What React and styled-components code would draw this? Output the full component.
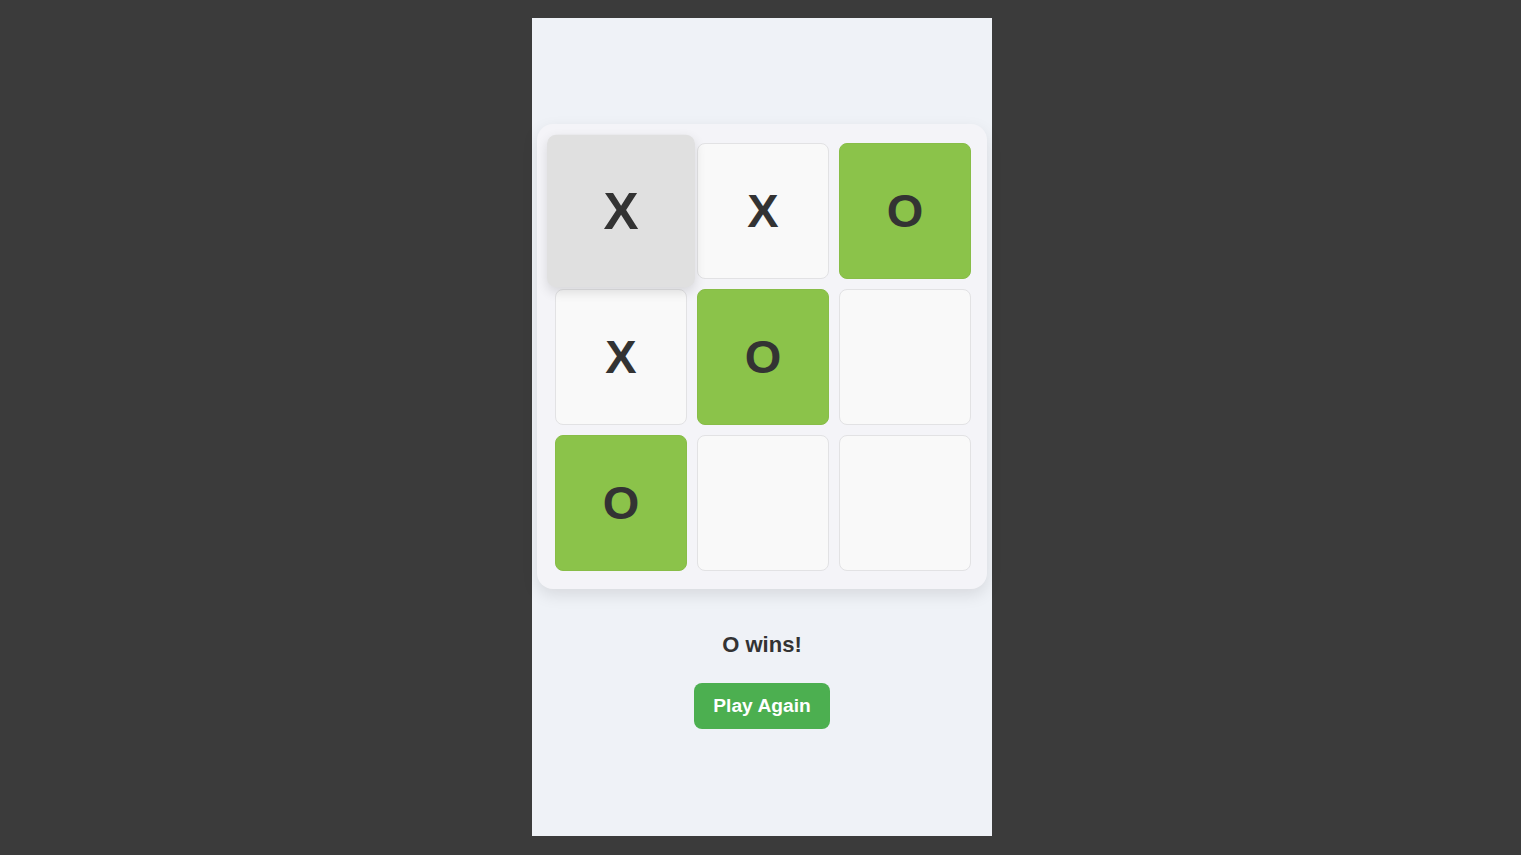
import React, { useState } from "react";
import styled, { createGlobalStyle } from "styled-components";

const GlobalStyle = createGlobalStyle`
  html, body {
    margin: 0;
    padding: 0;
    background-color: #3b3b3b;
    font-family: "Liberation Sans", Arial, sans-serif;
  }
`;

const Page = styled.div`
  width: 100%;
  height: 855px;
  box-sizing: border-box;
  padding-top: 18px;
  display: flex;
  justify-content: center;
  align-items: flex-start;
`;

const Phone = styled.main`
  width: 460px;
  height: 818px;
  margin-left: 3px;
  background-color: #eff2f7;
  display: flex;
  flex-direction: column;
  align-items: center;
  justify-content: flex-start;
  padding-top: 106px;
  box-sizing: border-box;
`;

const Board = styled.div`
  width: 450px;
  box-sizing: border-box;
  padding: 19px 17px 18px 18px;
  background-color: #f4f4f8;
  border-radius: 16px;
  box-shadow: 0 6px 16px rgba(0, 0, 0, 0.1);
  display: grid;
  grid-template-columns: repeat(3, 132px);
  grid-auto-rows: 136px;
  gap: 10px;
`;

const Cell = styled.button`
  box-sizing: border-box;
  border: 1px solid ${p => (p.$win ? "#88bd48" : p.$hover ? "#e0e0e0" : "#e2e2e4")};
  border-radius: 8px;
  background-color: ${p => (p.$win ? "#8bc34a" : p.$hover ? "#e0e0e0" : "#f9f9f9")};
  color: #333;
  font-family: "Liberation Sans", Arial, sans-serif;
  font-size: 47px;
  font-weight: bold;
  display: flex;
  align-items: center;
  justify-content: center;
  padding: 0 0 2px;
  cursor: pointer;
  transform: ${p => (p.$hover ? "scale(1.12)" : "none")};
  box-shadow: ${p => (p.$hover ? "0 4px 10px rgba(0, 0, 0, 0.12)" : "none")};
  position: relative;
  z-index: ${p => (p.$hover ? 1 : 0)};
`;

const Status = styled.p`
  margin: 43px 0 0;
  font-size: 22px;
  line-height: 25px;
  font-weight: bold;
  color: #333;
`;

const PlayButton = styled.button`
  margin-top: 26px;
  height: 46px;
  padding: 0 19px;
  border: none;
  border-radius: 8px;
  background-color: #4caf50;
  color: #fff;
  font-family: "Liberation Sans", Arial, sans-serif;
  font-size: 19.2px;
  font-weight: bold;
  cursor: pointer;
`;

const initial = ["X", "X", "O", "X", "O", "", "O", "", ""];
const winLine = [2, 4, 6];

export default function App() {
  const [board] = useState(initial);
  return (
    <Page>
      <GlobalStyle />
      <Phone>
        <Board>
          {board.map((v, i) => (
            <Cell key={i} $win={winLine.includes(i)} $hover={i === 0}>
              {v}
            </Cell>
          ))}
        </Board>
        <Status>O wins!</Status>
        <PlayButton>Play Again</PlayButton>
      </Phone>
    </Page>
  );
}
